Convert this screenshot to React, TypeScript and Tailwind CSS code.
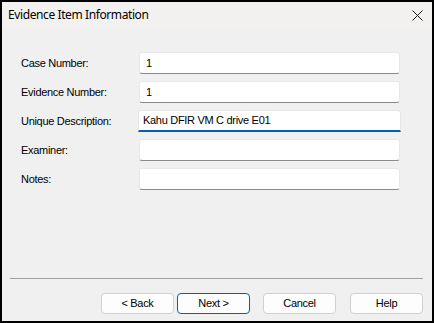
import React from "react";

const dlg = { fontFamily: '"Liberation Sans", Arial, sans-serif', letterSpacing: "-0.3px" };
const ttl = { fontFamily: '"Noto Sans", "Open Sans", sans-serif', letterSpacing: "-0.4px" };

function Row({ label, value, focused }: { label: string; value?: string; focused?: boolean }) {
  return (
    <div className="flex items-center h-[22px]">
      <div className="w-[118px] text-[11px] text-black leading-none">{label}</div>
      {focused ? (
        <div className="w-[263px] -ml-[1px] h-[22px] bg-white rounded-t-[3px] border border-[#e6e6e6] border-b-2 border-b-[#005fb8] flex items-center pl-[4px] text-[11px] text-black">
          {value}
        </div>
      ) : (
        <div className="w-[261px] h-[22px] bg-white rounded-[3px] border border-[#e8e8e8] border-b-[#8a8a8a] flex items-center pl-[6px] text-[11px] text-black">
          {value}
        </div>
      )}
    </div>
  );
}

function Btn({ label, primary }: { label: string; primary?: boolean }) {
  return (
    <div
      className={
        "w-[73px] h-[21px] rounded-[4px] bg-[#fdfdfd] flex items-center justify-center text-[11px] text-black border " +
        (primary ? "border-[#005fb8]" : "border-[#d0d0d0]")
      }
    >
      {label}
    </div>
  );
}

export default function App() {
  return (
    <div style={dlg} className="w-[434px] h-[323px] border-2 border-black bg-[#f0f0f0] flex flex-col overflow-hidden">
      <div className="h-[26px] bg-[#f3f1ef] flex items-center justify-between pl-[6px] pr-[9px] shrink-0">
        <span style={ttl} className="text-[12px] text-black">Evidence Item Information</span>
        <svg width="11" height="11" viewBox="0 0 11 11">
          <path d="M0.5 0.5 L10.5 10.5 M10.5 0.5 L0.5 10.5" stroke="#1a1a1a" strokeWidth="1" />
        </svg>
      </div>
      <div className="flex-1 flex flex-col">
        <div className="pt-[24px] pl-[19px] flex flex-col gap-[7px]">
          <Row label="Case Number:" value="1" />
          <Row label="Evidence Number:" value="1" />
          <Row label="Unique Description:" value="Kahu DFIR VM C drive E01" focused />
          <Row label="Examiner:" />
          <Row label="Notes:" />
        </div>
        <div className="mt-auto ml-[8px] mr-[9px] h-px bg-[#a0a0a0]" />
        <div className="flex justify-end pr-[9px] mt-[14px] mb-[7px]">
          <Btn label="< Back" />
          <div className="w-[3px]" />
          <Btn label="Next >" primary />
          <div className="w-[13px]" />
          <Btn label="Cancel" />
          <div className="w-[14px]" />
          <Btn label="Help" />
        </div>
      </div>
    </div>
  );
}
